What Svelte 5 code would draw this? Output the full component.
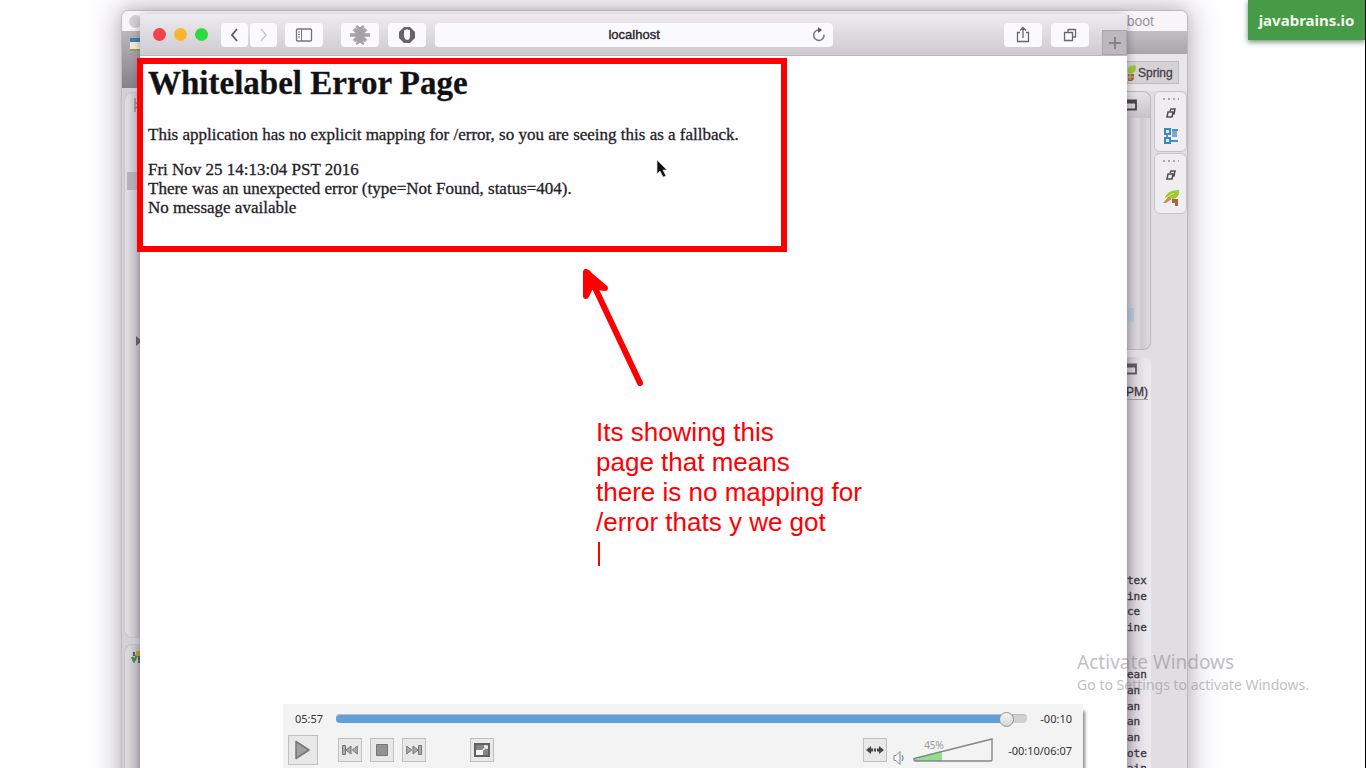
<script>
  const consoleLines = ['tex', 'ine', 'ce', 'ine', '', '', 'ean', 'an', 'an', 'an', 'an', 'ote', 'ain'];
  let position = $state(98);
  let volume = $state(45);
</script>

<main class="desktop">
  <section class="ide" aria-label="Workspace">
    <header class="ide-title"><i></i><span>boot</span></header>
    <div class="ide-body">
      <div class="ide-left">
        <div class="left-tools">
          <svg width="10" height="14" viewBox="0 0 10 14"><path d="M0 1h10v12H0z" fill="#f2edd2" /><path d="M0 1h10v4H0z" fill="#3f7fae" /><path d="M0 13h10" stroke="#9b9a63" stroke-width="2" /></svg>
        </div>
        <div class="explorer">
          <div class="explorer-head"><svg width="6" height="14" viewBox="0 0 6 14"><path d="M1 0v14M1 4l4 3-4 4" stroke="#8e8c96" fill="none" stroke-width="1.5" /></svg></div>
          <div class="explorer-row"></div>
          <svg class="twisty" width="6" height="10" viewBox="0 0 6 10"><path d="M0 0l6 5-6 5z" fill="#68656c" /></svg>
        </div>
        <div class="servers">
          <svg width="10" height="13" viewBox="0 0 10 13"><path d="M1 7l2 4 3-6" stroke="#4c8b46" stroke-width="2.500" fill="none" /><path d="M5 1h5v5H5z" fill="#c79b3d" /><path d="M8 6v7M3 2v4" stroke="#555a72" stroke-width="2" /></svg>
        </div>
      </div>
      <div class="ide-right">
        <div class="right-tools"></div>
        <div class="perspectives">
          <button class="perspective"><svg width="9" height="18" viewBox="0 0 9 18"><path d="M1 9Q-1 2 8 1l1 2Q9 9 3 10z" fill="#9bc832" /><path d="M1 10h6v5l-2 2H1z" fill="#9a633d" /><path d="M3 10v6M1 13h6" stroke="#d7b993" /></svg>Spring</button>
        </div>
        <div class="right-body">
          <div class="panes">
            <div class="editor">
              <div class="pane-head"><svg width="10" height="12" viewBox="0 0 10 12"><path d="M0 1.500h9v9H0M0 3.500h9" stroke="#47454a" stroke-width="1.800" fill="none" /></svg></div>
              <div class="pane-marker"></div>
            </div>
            <div class="console">
              <svg width="10" height="12" viewBox="0 0 10 12"><path d="M0 1.500h9v9H0M0 3.500h9" stroke="#5b585e" stroke-width="1.800" fill="none" /></svg>
              <div class="stamp">PM)</div>
              <div class="log">
                {#each consoleLines as line}<span>{line}</span>{/each}
              </div>
            </div>
          </div>
          <div class="trim">
            {#each [0, 1] as group}
              <div class="trim-group">
                <b></b>
                <svg width="10" height="10" viewBox="0 0 10 10"><path d="M4 3l1-2h4L8 6H7M2 4h5L6 9H1z" stroke="#514e50" stroke-width="1.500" fill="none" /></svg>
                {#if group === 0}
                  <svg width="16" height="18" viewBox="0 0 16 18"><path d="M2 2h5v5H2zM2 11h5v5H2z" stroke="#3f88be" stroke-width="2" fill="#dbeaf4" /><path d="M9 4h5v6H9z" fill="#76abd2" /><path d="M4 7v4M8 14h7M9 3h6" stroke="#4c92c5" stroke-width="2" /></svg>
                {:else}
                  <svg width="18" height="18" viewBox="0 0 18 18"><path d="M3 9Q5 1 17 1q1 8-6 9L8 8z" fill="#9bca35" /><path d="M1 14l6-7 3 3-6 4z" fill="#c69350" /><path d="M10 10h6v7h-3v-3h-3z" fill="#a7683e" /><path d="M4 9l8-5" stroke="#d8eb85" /></svg>
                {/if}
              </div>
            {/each}
          </div>
        </div>
      </div>
    </div>
  </section>

  <section class="browser" aria-label="Browser">
    <header class="toolbar">
      <div class="lights"><i class="red"></i><i class="amber"></i><i class="green"></i></div>
      <div class="pair">
        <button class="tool small" aria-label="Back"><svg width="14" height="16" viewBox="0 0 14 16"><path d="M9 2L4 8l5 6" stroke="#5c5a5e" stroke-width="1.800" fill="none" /></svg></button>
        <button class="tool small" aria-label="Forward"><svg width="14" height="16" viewBox="0 0 14 16"><path d="M4 2l5 6-5 6" stroke="#c9c7cb" stroke-width="1.500" fill="none" /></svg></button>
      </div>
      <button class="tool sidebar" aria-label="Sidebar"><svg width="18" height="16" viewBox="0 0 18 16"><rect x="1.500" y="2" width="15" height="12" rx="1" fill="none" stroke="#77757a" stroke-width="1.300" /><path d="M6.500 2v12M3 5h2M3 7.500h2M3 10h2" stroke="#77757a" /></svg></button>
      <button class="tool" aria-label="Extension"><svg width="20" height="20" viewBox="0 0 20 20"><path d="M10 10L6 1h2l2 2 2-2h2zM10 10L6 19h2l2-2 2 2h2z" fill="#a5a3a7" stroke="#a5a3a7" /><path d="M0 10h20M4 4l12 12M16 4L4 16" stroke="#a5a3a7" stroke-width="3.600" /></svg></button>
      <button class="tool" aria-label="Content blocker"><svg width="18" height="18" viewBox="0 0 18 18"><path d="M6 1h6l5 5v6l-5 5H6l-5-5V6z" fill="#666369" /><path d="M6 5q1-2 2-1 1-2 2 0 2-1 2 1v5q0 4-3 4-2 0-3-3z" fill="#f8f7f9" /></svg></button>
      <div class="address">
        <input aria-label="Address" value="localhost" />
        <button aria-label="Reload"><svg width="16" height="16" viewBox="0 0 16 16"><path d="M13 7.500A5.200 5.200 0 1 1 8 3" stroke="#79777b" stroke-width="1.500" fill="none" /><path d="M7 0l4 3-4 3z" fill="#59575b" /></svg></button>
      </div>
      <span class="gap"></span>
      <button class="tool" aria-label="Share"><svg width="14" height="18" viewBox="0 0 14 18"><path d="M4 6.500H1.500v9h11v-9H10M7 12V2M4 4.500l3-3 3 3" stroke="#69676b" stroke-width="1.300" fill="none" /></svg></button>
      <button class="tool tabs" aria-label="Show tabs"><svg width="14" height="14" viewBox="0 0 14 14"><path d="M5 4V1.500h7.500V9H10M1.500 4.500H9.500V12.500H1.500z" stroke="#69676b" stroke-width="1.300" stroke-linejoin="round" fill="none" /></svg></button>
      <button class="new-tab" aria-label="New tab"><svg width="12" height="12" viewBox="0 0 12 12"><path d="M6 0v12M0 6h12" stroke="#77747a" stroke-width="1.500" /></svg></button>
    </header>
    <article class="page">
      <h1>Whitelabel Error Page</h1>
      <p>This application has no explicit mapping for /error, so you are seeing this as a fallback.</p>
      <div>Fri Nov 25 14:13:04 PST 2016</div>
      <div>There was an unexpected error (type=Not Found, status=404).</div>
      <div>No message available</div>
    </article>
  </section>

  <div class="frame"></div>
  <svg class="pointer" width="14" height="22" viewBox="0 0 14 22"><path d="M2 2v14l3-3 3 6 3-1-3-6h4z" fill="#111" stroke="#ddd" stroke-width=".7" /></svg>
  <svg class="arrow" width="64" height="124" viewBox="0 0 64 124"><path d="M8 8l52 110" stroke="red" stroke-width="6" stroke-linecap="round" /><path d="M6 7v24l5-10 14 2z" fill="red" stroke="red" stroke-width="6" stroke-linejoin="round" /></svg>
  <p class="note">Its showing this<br />page that means<br />there is no mapping for<br />/error thats y we got<br /><i></i></p>

  <a class="brand" href="#top">javabrains.io</a>
  <aside class="watermark"><strong>Activate Windows</strong><span>Go to Settings to activate Windows.</span></aside>

  <section class="player" aria-label="Player">
    <div class="timeline">
      <span>05:57</span>
      <input type="range" aria-label="Position" bind:value={position} style="--fill: {position}%" />
      <span>-00:10</span>
    </div>
    <div class="controls">
      <button class="play" aria-label="Play"><svg width="18" height="20" viewBox="0 0 18 20"><path d="M2 1.500l13 8.500-13 8.500z" fill="#a0a0a0" stroke="#777" stroke-width="1.500" stroke-linejoin="round" /></svg></button>
      <div class="transport">
        <button aria-label="Previous"><svg width="16" height="10" viewBox="0 0 16 10"><path d="M.5.5h3v9h-3zM9 1v8L4 5zM15.300 1v8l-5-4z" fill="#aaa" stroke="#777" /></svg></button>
        <button aria-label="Stop"><svg width="12" height="12" viewBox="0 0 12 12"><path d="M.5.5h11v11H.5z" fill="#929292" stroke="#777" /></svg></button>
        <button aria-label="Next"><svg width="16" height="10" viewBox="0 0 16 10"><path d="M12.500.5h3v9h-3zM7 1v8l5-4zM.7 1v8l5-4z" fill="#aaa" stroke="#777" /></svg></button>
      </div>
      <button aria-label="Full screen"><svg width="16" height="14" viewBox="0 0 16 14"><path d="M1 1h14v12H1z" fill="#858585" stroke="#606060" stroke-width="2" /><path d="M2 7h7v5H2z" fill="#f3f3f3" /><path d="M9 7l4-4M10 3h3v3" stroke="#f3f3f3" stroke-width="1.500" fill="none" /></svg></button>
      <span class="gap"></span>
      <button aria-label="Fit width"><svg width="18" height="10" viewBox="0 0 18 10"><path d="M0 5l5-4v8zM18 5l-5-4v8z" fill="#444" /><path d="M5 5h8" stroke="#444" stroke-width="3" stroke-dasharray="2 1" /></svg></button>
      <svg class="speaker" width="12" height="14" viewBox="0 0 12 14"><path d="M1 4.500h2l4-4v13l-4-4H1z" fill="#f8f8f8" stroke="#888" /><path d="M9 4q2 3 0 6" stroke="#7795c8" stroke-width="1.300" fill="none" /></svg>
      <label class="volume">
        <span>{volume}%</span>
        <svg width="80" height="24" viewBox="0 0 80 24"><path d="M1 22v-1l28-8v10H2z" fill="#8de08d" /><path d="M79 1v21l-1 1H2l-1-1v-1.500z" fill="none" stroke="#858585" stroke-width="1.400" /></svg>
        <input type="range" aria-label="Volume" bind:value={volume} />
      </label>
      <span>-00:10/06:07</span>
    </div>
  </section>
</main>

<style>
  :global(body) { margin: 0; }
  * { box-sizing: border-box; }
  svg { display: block; flex: none; }
  button { border: 0; padding: 0; display: flex; align-items: center; justify-content: center; font: inherit; color: inherit; }
  .gap { flex: 1; }
  .desktop { position: relative; min-height: 100vh; overflow: hidden; background: #fefdff; border-right: 1px solid #000; font-family: "Liberation Sans", Arial, sans-serif; }

  .ide { position: absolute; left: 121px; right: 177px; top: 10px; bottom: -40px; display: flex; flex-direction: column; background: #e7e4e8; border: 1px solid #bdb9bf; border-radius: 7px 7px 0 0; box-shadow: 0 0 28px 2px rgba(62, 50, 68, .36), 0 0 10px rgba(62, 50, 68, .08); overflow: hidden; }
  .ide-title { height: 20px; flex: none; display: flex; align-items: center; justify-content: space-between; padding: 0 33px 0 7px; background: #f7f5f8; color: #99969c; font-size: 14px; }
  .ide-title i { width: 13px; height: 13px; border-radius: 50%; background: #d4d1d6; }
  .ide-body { flex: 1; display: flex; justify-content: space-between; }
  .ide-left { width: 18px; display: flex; flex-direction: column; background: #d5d1d7; }
  .left-tools { height: 57px; padding: 6px 0 0 8px; background: linear-gradient(#bab6bb, #858187); }
  .explorer { height: 546px; margin: 4px 0 0 2px; border: 1px solid #c6c2c8; border-right: 0; border-radius: 8px 0 0 8px; background: linear-gradient(90deg, #e2dfe4, #c3bfc5); }
  .explorer-head { height: 26px; padding: 5px 0 0 9px; }
  .explorer-row { height: 18px; margin: 53px 0 0 2px; background: #b5b1b7; }
  .twisty { margin: 146px 0 0 11px; }
  .servers { flex: 1; margin: 6px 0 0 2px; padding: 5px 0 0 6px; border: 1px solid #c3bfc5; border-right: 0; border-radius: 8px 0 0 0; background: linear-gradient(90deg, #dfdce1, #c1bdc3); }

  .ide-right { width: 61px; display: flex; flex-direction: column; }
  .right-tools { height: 23px; background: linear-gradient(#c2bec4, #a9a6ab); }
  .perspectives { height: 37px; padding: 7px 8px 0 0; background: #e9e6ea; }
  .perspective { width: 100%; height: 23px; justify-content: flex-start; gap: 2px; background: #d5d2d6; border: 1px solid #bfbbc1; color: #454247; font-size: 12px; -webkit-text-stroke: .3px #454247; }
  .right-body { flex: 1; display: flex; gap: 3px; background: #e0dee2; }
  .panes { width: 25px; display: flex; flex-direction: column; gap: 7px; }
  .editor { height: 259px; border: 1px solid #b9b5bb; border-left: 0; border-radius: 0 8px 8px 0; background: linear-gradient(90deg, #c5c1c7, #d9d6da 12px, #cdcace 16px, #e0dde1); overflow: hidden; }
  .pane-head { height: 26px; padding: 7px 0 0 1px; background: linear-gradient(#e6e3e7, #c6c3c8); }
  .pane-marker { width: 8px; height: 14px; margin-top: 190px; background: #b5c4d6; }
  .console { flex: 1; padding: 6px 0 0 1px; border-radius: 0 8px 0 0; background: linear-gradient(90deg, #c4bfc5, #e8e5ea 18px, #eceaee); color: #373439; }
  .stamp { height: 15px; margin: 10px 3px 0 0; overflow: hidden; display: flex; justify-content: flex-end; align-items: center; border-bottom: 1px solid #a4a1a6; font-size: 12px; -webkit-text-stroke: .3px #373439; }
  .log { display: grid; grid-template-rows: repeat(13, 1fr); height: 204px; margin-top: 173px; font-family: "DejaVu Sans Mono", monospace; font-size: 11px; line-height: 15px; -webkit-text-stroke: .3px #373439; }
  .trim { width: 33px; display: flex; flex-direction: column; gap: 1px; }
  .trim-group { height: 61px; display: flex; flex-direction: column; align-items: center; padding-top: 6px; border: 1px solid #c6c3c8; border-radius: 6px; background: #efedf0; }
  .trim-group b { width: 16px; height: 2px; margin-bottom: 8px; background: repeating-linear-gradient(90deg, #aaa7ad 0 2px, transparent 2px 5px); }
  .trim-group svg + svg { margin-top: 9px; }

  .browser { position: absolute; left: 140px; right: 238px; top: 14px; bottom: -40px; display: flex; flex-direction: column; background: #fefdff; border-radius: 6px 6px 0 0; box-shadow: 0 2px 10px rgba(40, 32, 45, .4); overflow: hidden; }
  .toolbar { height: 42px; flex: none; display: flex; align-items: center; padding-left: 13px; background: linear-gradient(#eeebf0, #dedbe0 50%, #cecbd0); border-bottom: 1px solid #bbb7bd; }
  .lights { display: flex; gap: 8px; margin-right: 13px; }
  .lights i { width: 13px; height: 13px; border-radius: 50%; }
  .red { background: #f2424c; }
  .amber { background: #f8b52f; }
  .green { background: #30da41; }
  .pair { display: flex; gap: 2px; margin-right: 8px; }
  .tool { width: 38px; height: 24px; flex: none; margin-right: 9px; border-radius: 4px; background: #faf9fb; }
  .small { width: 27px; margin: 0; }
  .sidebar { margin-right: 18px; }
  .address { flex: 7; height: 24px; display: flex; align-items: center; border-radius: 4px; background: #faf9fb; }
  .address input { flex: 1; min-width: 0; margin-left: 22px; padding: 0; border: 0; background: none; text-align: center; color: #29272b; font: 13px "Liberation Sans", Arial, sans-serif; -webkit-text-stroke: .4px #29272b; }
  .address button { margin-right: 6px; background: none; }
  .toolbar .gap { flex: 3; }
  .tabs { margin-right: 13px; }
  .new-tab { width: 25px; height: 25px; align-self: flex-end; background: #bcb9be; border: 1px solid #aaa7ac; }
  .page { padding: 8px 8px 0; font-family: "Liberation Serif", "Times New Roman", serif; font-size: 17px; line-height: 19px; color: #242226; -webkit-text-stroke: .3px #242226; }
  .page h1 { margin: 0 0 22px; font-size: 33px; line-height: 39px; color: #111; }
  .page p { margin: 0 0 16px; }

  .frame { position: absolute; left: 137px; top: 58px; width: 650px; height: 194px; border: 6px solid red; }
  .pointer { position: absolute; left: 655px; top: 158px; }
  .arrow { position: absolute; left: 580px; top: 265px; }
  .note { position: absolute; left: 596px; top: 417px; margin: 0; color: red; font-size: 26px; line-height: 30px; white-space: nowrap; }
  .note i { display: inline-block; width: 2px; height: 24px; margin-left: 2px; vertical-align: middle; background: red; }

  .brand { position: absolute; right: 0; top: 0; width: 117px; height: 40px; display: flex; align-items: center; justify-content: center; background: #479a46; color: #f2f8ee; font: bold 15px "Noto Sans", sans-serif; text-decoration: none; box-shadow: 0 2px 5px rgba(20, 70, 20, .6); }
  .watermark { position: absolute; right: 56px; top: 650px; display: flex; flex-direction: column; color: rgba(130, 130, 130, .5); font: 14px/20px "Noto Sans", sans-serif; }
  .watermark strong { font-size: 19px; line-height: 25px; font-weight: 400; }

  .player { position: absolute; left: 283px; right: 282px; bottom: 0; height: 64px; display: flex; flex-direction: column; background: #f3f3f3; box-shadow: 3px 6px 3px -1px rgba(60, 60, 60, .6); color: #333; font: 11px "Noto Sans", sans-serif; }
  .timeline { height: 29px; display: flex; align-items: center; gap: 13px; padding: 0 11px 0 12px; }
  .timeline input { flex: 1; min-width: 0; height: 9px; margin: 0; appearance: none; border-radius: 4px; border-top: 1px solid #bbb; background: linear-gradient(90deg, #619fdb var(--fill), #d0d0d0 var(--fill)); }
  .timeline input::-webkit-slider-thumb { appearance: none; width: 15px; height: 15px; border: 1px solid #929292; border-radius: 50%; background: linear-gradient(#f4f4f4, #d5d5d5); }
  .controls { height: 34px; display: flex; align-items: center; padding: 0 11px 0 5px; }
  .controls button { width: 24px; height: 24px; flex: none; border: 1px solid #bfbfbf; background: #e8e8e8; }
  .controls .play { width: 30px; height: 30px; margin-right: 20px; }
  .transport { display: flex; gap: 8px; margin-right: 44px; }
  .speaker { align-self: flex-end; margin: 0 8px 2px 6px; }
  .volume { position: relative; width: 80px; margin-right: 15px; }
  .volume span { position: absolute; left: 11px; top: 0; color: #999; font-size: 10px; line-height: 14px; }
  .volume input { position: absolute; inset: 0; width: 100%; height: 100%; margin: 0; opacity: 0; }
</style>
